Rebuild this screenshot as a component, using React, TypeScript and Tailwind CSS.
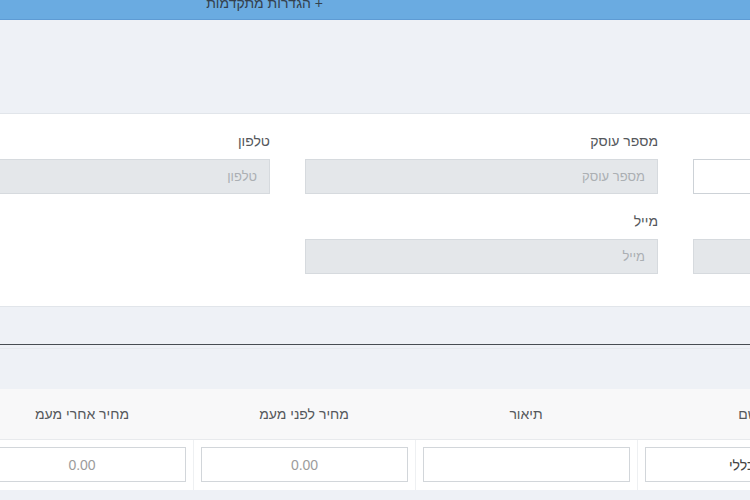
const font = "font-['Liberation_Sans','DejaVu_Sans',Arial,sans-serif]";

type FieldProps = {
  label?: string;
  placeholder?: string;
  disabled?: boolean;
  hidden?: boolean;
};

function Field({ label, placeholder, disabled, hidden }: FieldProps) {
  if (hidden) return <div />;
  return (
    <div className="flex flex-col">
      <label className="h-[20px] mb-[8px] text-[14px] leading-[20px] text-[#55585c] text-right">{label}</label>
      <input
        readOnly
        placeholder={placeholder}
        className={
          "h-[35px] w-full px-[12px] text-[13px] text-right outline-none border placeholder:text-[#abafb3] " +
          (disabled ? "bg-[#e4e7ea] border-[#d6dade]" : "bg-white border-[#cdd2d7]")
        }
      />
    </div>
  );
}

const columns = [
  { title: "שם", value: "פריט כללי", placeholder: "" },
  { title: "תיאור", value: "", placeholder: "" },
  { title: "מחיר לפני מעמ", value: "", placeholder: "0.00" },
  { title: "מחיר אחרי מעמ", value: "", placeholder: "0.00" },
];

export default function App() {
  return (
    <div className={"w-[750px] h-[500px] overflow-hidden bg-[#eef1f6] " + font}>
      {/* top bar */}
      <div dir="rtl" className="flex h-[20px] overflow-hidden bg-[#6aabe1] border-b border-[#5e9bd4]">
        <button className="mr-[427px] -mt-[7px] h-[20px] leading-[20px] text-[14px] text-[#34414e] whitespace-nowrap">
          + הגדרות מתקדמות
        </button>
      </div>

      <div className="h-[93px]" />

      {/* business details panel */}
      <div className="bg-white border-y border-[#e1e5ea] pt-[17px] pb-[32px]">
        <div dir="rtl" className="ml-[-83px] w-[1129px] grid grid-cols-[353px_353px_353px] gap-x-[35px] gap-y-[17px]">
          <Field label="" placeholder="" />
          <Field label="מספר עוסק" placeholder="מספר עוסק" disabled />
          <Field label="טלפון" placeholder="טלפון" disabled />
          <Field label="" placeholder="" disabled />
          <Field label="מייל" placeholder="מייל" disabled />
          <Field hidden />
        </div>
      </div>

      {/* divider band */}
      <div className="h-[82px] pt-[37px]">
        <div className="h-px bg-[#474c52]" />
        <div className="h-px bg-[#e6e9ee] mt-[3px]" />
      </div>

      {/* items table */}
      <div dir="rtl" className="ml-[-29px] w-[888px]">
        <div className="flex h-[51px] bg-[#f8f8f9] border-b border-[#e8eaed]">
          {columns.map((c) => (
            <div key={c.title} className="w-[222px] text-center text-[14px] leading-[50px] text-[#55585c]">
              {c.title}
            </div>
          ))}
        </div>
        <div className="flex h-[50px] bg-white">
          {columns.map((c, i) => (
            <div
              key={c.title}
              className={"w-[222px] px-[7px] pt-[7px] " + (i < columns.length - 1 ? "border-l border-[#eef0f2]" : "")}
            >
              <input
                readOnly
                defaultValue={c.value}
                placeholder={c.placeholder}
                className={
                  "h-[35px] w-full bg-white border border-[#d2d6da] text-[14px] outline-none text-[#444] placeholder:text-[#9c9c9c] " +
                  (c.placeholder ? "text-center" : i === 0 ? "text-right pr-[64px]" : "text-right px-[12px]")
                }
              />
            </div>
          ))}
        </div>
      </div>
    </div>
  );
}
